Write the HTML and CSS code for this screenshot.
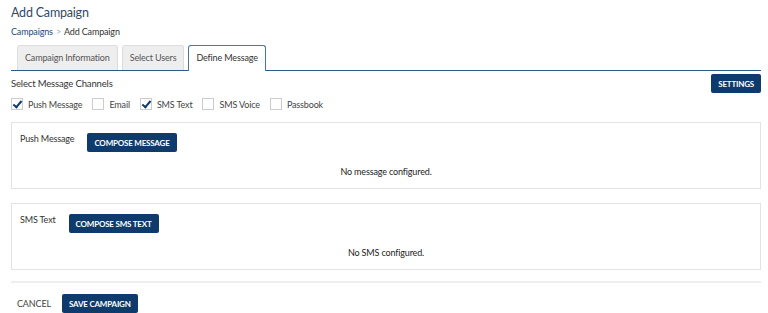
FILE: index.html
```html
<html>
<head>
  <link rel="stylesheet" href="styles.css">
</head>
<body>
<div class="page">
  <h1 class="title">Add Campaign</h1>
  <div class="crumbs">
    <a class="crumb-link">Campaigns</a>
    <span class="crumb-sep">&gt;</span>
    <span>Add Campaign</span>
  </div>

  <ul class="tabs">
    <li class="tab">Campaign Information</li>
    <li class="tab">Select Users</li>
    <li class="tab active">Define Message</li>
  </ul>

  <div class="channels-head">
    <span class="section-label">Select Message Channels</span>
    <button class="btn">SETTINGS</button>
  </div>

  <div class="channels">
    <label class="check"><span class="box on"></span>Push Message</label>
    <label class="check"><span class="box"></span>Email</label>
    <label class="check"><span class="box on"></span>SMS Text</label>
    <label class="check"><span class="box"></span>SMS Voice</label>
    <label class="check"><span class="box"></span>Passbook</label>
  </div>

  <div class="panel">
    <div class="panel-head">
      <span class="panel-label">Push Message</span>
      <button class="btn">COMPOSE MESSAGE</button>
    </div>
    <p class="empty">No message configured.</p>
  </div>

  <div class="panel">
    <div class="panel-head">
      <span class="panel-label">SMS Text</span>
      <button class="btn">COMPOSE SMS TEXT</button>
    </div>
    <p class="empty">No SMS configured.</p>
  </div>

  <div class="actions">
    <a class="cancel">CANCEL</a>
    <button class="btn">SAVE CAMPAIGN</button>
  </div>
</div>
</body>
</html>
```

FILE: styles.css
```css
html, body {
  margin: 0;
  font: normal 9px Lato, "Open Sans", sans-serif;
  letter-spacing: -0.15px;
  color: #333;
  background: #fff;
}
.page {
  padding: 4px 7px 0 11px;
}
.title {
  margin: 0;
  font-size: 12.5px;
  font-weight: normal;
  letter-spacing: -0.2px;
  color: #2f4a68;
  line-height: 18px;
}
.crumbs {
  margin-top: 3px;
  line-height: 14px;
  color: #333;
}
.crumb-link {
  color: #1d4a7a;
}
.crumb-sep {
  color: #aaa;
  margin: 0 1px;
}
.tabs {
  list-style: none;
  margin: 6px 0 0 0;
  padding: 0 0 0 6px;
  display: flex;
  gap: 4px;
  border-bottom: 1px solid #2d5a88;
  height: 25px;
}
.tab {
  padding: 0 7px;
  line-height: 24px;
  background: #eee;
  border: 1px solid #ddd;
  border-bottom: none;
  border-radius: 3px 3px 0 0;
  color: #555;
}
.tab.active {
  background: #fff;
  border-color: #4a76a2;
  color: #333;
  height: 25px;
}
.channels-head {
  display: flex;
  justify-content: space-between;
  align-items: center;
  margin-top: 3px;
}
.section-label {
  font-size: 9.5px;
  color: #333;
}
.btn {
  font: bold 8px Lato, "Open Sans", sans-serif;
  letter-spacing: -0.2px;
  color: #fff;
  background: #0e3b6c;
  border: none;
  border-radius: 2px;
  height: 19px;
  padding: 0 7px;
}
.channels {
  display: flex;
  gap: 10px;
  margin-top: 3px;
  height: 16px;
  align-items: center;
}
.check {
  display: flex;
  align-items: center;
  gap: 5px;
  color: #444;
}
.box {
  width: 10px;
  height: 10px;
  border: 1px solid #ccc;
  position: relative;
}
.box.on::after {
  content: "";
  position: absolute;
  left: 3px;
  top: 0px;
  width: 3px;
  height: 7px;
  border: solid #0e3b6c;
  border-width: 0 2px 2px 0;
  transform: rotate(40deg);
}
.panel {
  border: 1px solid #e3e3e3;
  margin-top: 10px;
  height: 67px;
  padding: 10px 8px 0 8px;
  box-sizing: border-box;
}
.panel + .panel {
  margin-top: 14px;
}
.panel-head {
  display: flex;
  gap: 13px;
  align-items: flex-start;
}
.panel-label {
  line-height: 12px;
  color: #333;
}
.empty {
  margin: 14px 0 0 0;
  text-align: center;
  color: #222;
}
.actions {
  border-top: 2px solid #eee;
  margin-top: 11px;
  padding: 11px 0 0 6px;
  display: flex;
  align-items: center;
  gap: 11px;
}
.cancel {
  color: #444;
  font-size: 9px;
}
```
